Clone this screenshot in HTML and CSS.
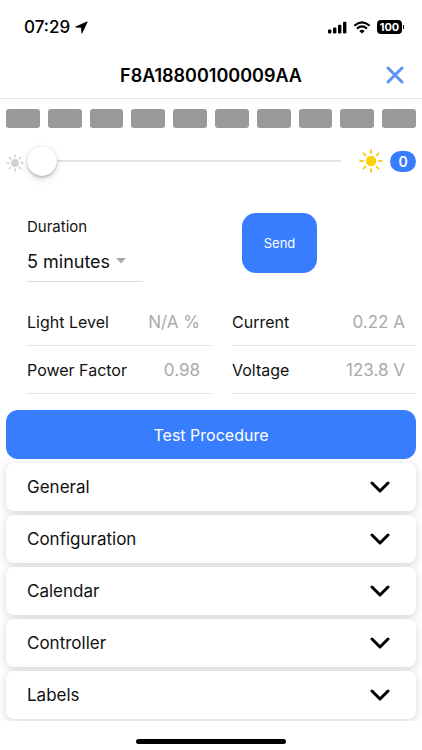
FILE: index.html
```html
<!DOCTYPE html>
<html lang="en">

<head>
    <meta charset="UTF-8">
    <meta name="viewport" content="width=device-width, initial-scale=1.0">
    <title>F8A18800100009AA</title>
    <link rel="stylesheet" href="styles.css">
</head>

<body>
    <!-- Status bar -->
    <div class="status-bar">
        <div class="status-left">
            <span>07:29</span>
            <svg width="13" height="13" viewBox="0 0 13 13"><path d="M12.1 .4 L.6 5.6 Q-.1 6.2 .8 6.5 L6.1 6.7 L6.4 12.1 Q6.7 13 7.3 12.2 L12.6 1 Q12.8 .2 12.1 .4Z"/></svg>
        </div>
        <div class="status-right">
            <svg width="19" height="13" viewBox="0 0 19 13"><rect x="0" y="8.5" width="3.4" height="4" rx="1"/><rect x="5" y="6.5" width="3.4" height="6" rx="1"/><rect x="10" y="3.7" width="3.4" height="8.8" rx="1"/><rect x="15" y=".7" width="3.4" height="11.8" rx="1"/></svg>
            <svg width="18" height="13" viewBox="0 0 18 13"><path d="M1.3 4.7 Q9 -2 16.7 4.7 M4 7.6 Q9 3.3 14 7.6" fill="none" stroke="#000" stroke-width="2.1"/><path d="M6.3 9.9 Q9 7.7 11.7 9.9 L9 12.6Z"/></svg>
            <span class="battery">100</span>
        </div>
    </div>

    <header class="header">
        <h1>F8A18800100009AA</h1>
        <button class="close" aria-label="Close">
            <svg width="18" height="18" viewBox="0 0 18 18"><path d="M2 2 L16 16 M16 2 L2 16"/></svg>
        </button>
    </header>

    <main class="content">
        <div class="blocks">
            <span></span><span></span><span></span><span></span><span></span>
            <span></span><span></span><span></span><span></span><span></span>
        </div>

        <!-- Dimming -->
        <div class="dimmer">
            <svg class="sun sun-low" viewBox="0 0 24 24"><circle cx="12" cy="12" r="5.2"/><path d="M12 1.2V4 M12 20V22.8 M1.2 12H4 M20 12H22.8 M4.4 4.4L6.4 6.4 M17.6 17.6L19.6 19.6 M4.4 19.6L6.4 17.6 M17.6 6.4L19.6 4.4"/></svg>
            <input type="range" class="slider" aria-label="Brightness" min="0" max="100" value="0">
            <svg class="sun sun-high" viewBox="0 0 24 24"><circle cx="12" cy="12" r="5.2"/><path d="M12 1.2V4 M12 20V22.8 M1.2 12H4 M20 12H22.8 M4.4 4.4L6.4 6.4 M17.6 17.6L19.6 19.6 M4.4 19.6L6.4 17.6 M17.6 6.4L19.6 4.4"/></svg>
            <span class="level">0</span>
        </div>

        <div class="send-row">
            <div class="duration">
                <label for="duration">Duration</label>
                <div class="select-wrap">
                    <select id="duration">
                        <option>5 minutes</option>
                    </select>
                    <svg width="10" height="6" viewBox="0 0 10 6"><path d="M0 0H10L5 5.5Z"/></svg>
                </div>
            </div>
            <div>
                <button class="send">Send</button>
            </div>
        </div>

        <dl class="readings">
            <div class="reading"><dt>Light Level</dt><dd>N/A %</dd></div>
            <div class="reading"><dt>Current</dt><dd>0.22 A</dd></div>
            <div class="reading"><dt>Power Factor</dt><dd>0.98</dd></div>
            <div class="reading"><dt>Voltage</dt><dd>123.8 V</dd></div>
        </dl>

        <button class="test">Test Procedure</button>

        <div class="sections">
            <button class="section">General <svg viewBox="0 0 20 12"><path d="M2 2L10 10L18 2"/></svg></button>
            <button class="section">Configuration <svg viewBox="0 0 20 12"><path d="M2 2L10 10L18 2"/></svg></button>
            <button class="section">Calendar <svg viewBox="0 0 20 12"><path d="M2 2L10 10L18 2"/></svg></button>
            <button class="section">Controller <svg viewBox="0 0 20 12"><path d="M2 2L10 10L18 2"/></svg></button>
            <button class="section">Labels <svg viewBox="0 0 20 12"><path d="M2 2L10 10L18 2"/></svg></button>
        </div>
    </main>

    <footer class="home">
        <div class="home-bar"></div>
    </footer>
</body>

</html>
```
FILE: styles.css
```css
* {
    box-sizing: border-box;
}

body {
    margin: 0;
    min-height: 100vh;
    display: flex;
    flex-direction: column;
    background-color: #fff;
    color: #111;
    font-family: Inter, Roboto, sans-serif;
    font-size: 16px;
}

button,
select {
    font-family: inherit;
    border: none;
    cursor: pointer;
}

svg {
    display: block;
    flex-shrink: 0;
}

/* Status bar */
.status-bar {
    display: flex;
    justify-content: space-between;
    align-items: center;
    height: 52px;
    padding: 2px 20px 0 24px;
    color: #000;
}

.status-left {
    display: flex;
    align-items: center;
    gap: 5px;
    font-size: 17px;
    font-weight: 500;
}

.status-right {
    display: flex;
    align-items: center;
    gap: 6px;
}

.battery {
    position: relative;
    width: 25px;
    line-height: 14px;
    border-radius: 4px;
    background-color: #000;
    color: #fff;
    font-size: 11px;
    font-weight: 700;
    text-align: center;
}

.battery::after {
    content: "";
    position: absolute;
    right: -2px;
    top: 5px;
    width: 1px;
    height: 4px;
    background-color: #000;
}

/* Header */
.header {
    display: grid;
    grid-template-columns: 40px 1fr 40px;
    align-items: center;
    height: 47px;
    padding: 0 7px;
    border-bottom: 1px solid #e8e8e8;
}

.header h1 {
    grid-column: 2;
    margin: 0;
    color: #000;
    font-size: 18px;
    font-weight: 600;
    text-align: center;
}

.close {
    display: flex;
    justify-content: center;
    padding: 8px 0;
    background: none;
}

.close path {
    stroke: #5b94ee;
    stroke-width: 3;
    stroke-linecap: round;
}

.content {
    flex: 1;
    overflow: hidden;
    padding: 10px 6px 2px;
}

.blocks {
    display: grid;
    grid-template-columns: repeat(10, 1fr);
    gap: 8px;
}

.blocks span {
    height: 19px;
    border-radius: 3px;
    background-color: #999;
}

/* Dimmer */
.dimmer {
    display: flex;
    align-items: center;
    height: 30px;
    margin-top: 18px;
}

.sun path {
    fill: none;
    stroke-width: 2;
    stroke-linecap: round;
}

.sun-low {
    width: 18px;
    height: 18px;
    margin-top: 4px;
    fill: #d0d0d0;
    stroke: #d0d0d0;
}

.sun-high {
    width: 24px;
    height: 24px;
    margin: 0 7px 0 18px;
    fill: #fdd20a;
    stroke: #f5ce2a;
}

.sun circle {
    stroke: none;
}

.slider {
    appearance: none;
    flex: 1;
    min-width: 0;
    height: 30px;
    margin: 0 0 0 3px;
    background: linear-gradient(#e2e2e2, #e2e2e2) center / 100% 2px no-repeat;
}

.slider::-webkit-slider-thumb {
    appearance: none;
    width: 30px;
    height: 30px;
    border-radius: 50%;
    background-color: #fff;
    box-shadow: 0 2px 2px rgba(0, 0, 0, 0.18), 0 3px 8px rgba(0, 0, 0, 0.12), 0 0 1px rgba(0, 0, 0, 0.2);
}

.level {
    width: 26px;
    line-height: 21px;
    border-radius: 11px;
    background-color: #387dfe;
    color: #fff;
    font-size: 14px;
    font-weight: 600;
    text-align: center;
}

/* Duration and send */
.send-row {
    display: grid;
    grid-template-columns: 1fr 1fr;
    column-gap: 21px;
    margin-top: 37px;
    padding-left: 21px;
}

.send-row > div:last-child {
    padding-left: 10px;
}

.duration {
    justify-self: start;
    width: 116px;
    border-bottom: 1px solid #ddd;
}

.duration label {
    display: block;
    padding-top: 4px;
    font-size: 15px;
    line-height: 20px;
}

.select-wrap {
    display: flex;
    align-items: center;
    gap: 5px;
    height: 40px;
    margin-top: 4px;
}

.select-wrap select {
    appearance: none;
    padding: 0;
    background: none;
    color: #111;
    font-size: 18px;
}

.select-wrap svg {
    fill: #aaa;
}

.send {
    width: 75px;
    height: 60px;
    border-radius: 14px;
    background-color: #387dfe;
    color: #fff;
    font-size: 13px;
}

/* Readings */
.readings {
    display: grid;
    grid-template-columns: 1fr 1fr;
    column-gap: 21px;
    margin: 16px 0;
    padding-left: 21px;
}

.reading {
    display: flex;
    justify-content: space-between;
    align-items: center;
    height: 48px;
    padding-right: 11px;
    border-bottom: 1px solid #e2e2e2;
}

.reading dd {
    margin: 0;
    color: #aaa;
    font-size: 17px;
}

.test {
    display: block;
    width: 100%;
    height: 49px;
    border-radius: 12px;
    background-color: #387dfe;
    color: #fff;
    font-size: 16px;
}

/* Accordion */
.sections {
    display: grid;
    gap: 4px;
    margin-top: 4px;
}

.section {
    display: flex;
    justify-content: space-between;
    align-items: center;
    height: 48px;
    padding: 0 26px 0 21px;
    border-radius: 8px;
    background-color: #fff;
    box-shadow: 0 2px 10px rgba(0, 0, 0, 0.16);
    color: #111;
    font-size: 17px;
}

.section svg {
    width: 20px;
    height: 12px;
    fill: none;
    stroke: #000;
    stroke-width: 3;
    stroke-linecap: round;
    stroke-linejoin: round;
}

.home {
    display: flex;
    justify-content: center;
    align-items: center;
    height: 30px;
    padding-top: 10px;
}

.home-bar {
    width: 150px;
    height: 5px;
    border-radius: 3px;
    background-color: #000;
}
```
